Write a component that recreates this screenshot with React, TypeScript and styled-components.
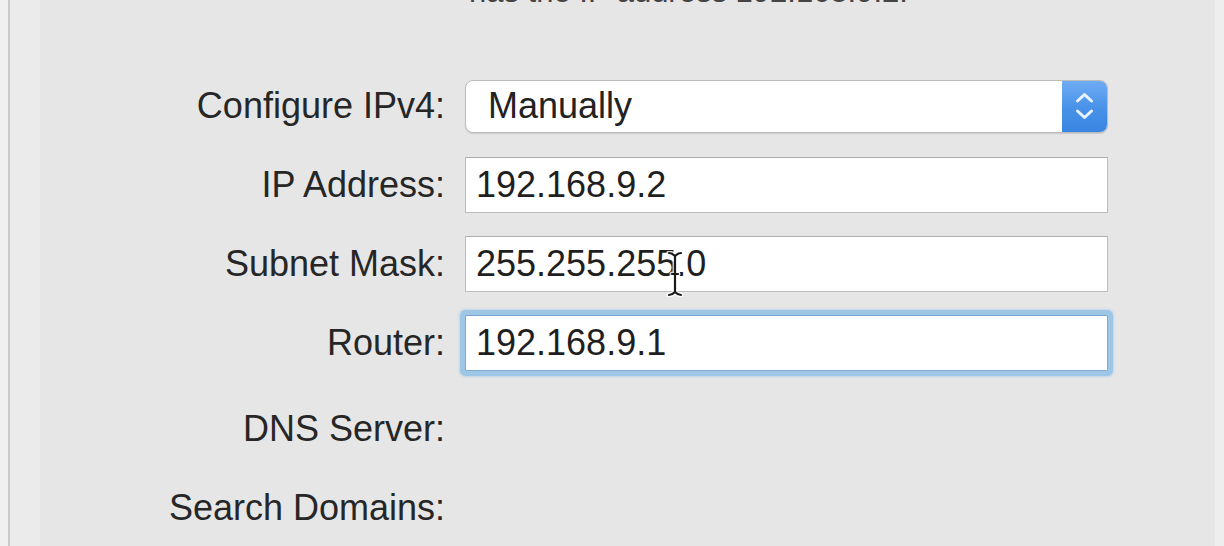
import React from "react";
import styled, { createGlobalStyle } from "styled-components";

const Global = createGlobalStyle`
  html, body { margin: 0; padding: 0; }
  body {
    width: 1224px;
    height: 546px;
    overflow: hidden;
    background: #f0f0f0;
    font-family: "Liberation Sans", Arial, Helvetica, sans-serif;
    -webkit-font-smoothing: antialiased;
  }
`;

const Page = styled.div`
  display: flex;
  width: 1224px;
  height: 546px;
  overflow: hidden;
`;

const Gutter = styled.div<{ $w: number; $bg: string }>`
  flex: 0 0 ${(p) => p.$w}px;
  background: ${(p) => p.$bg};
`;

const Panel = styled.div`
  flex: 1;
  background: #e6e6e6;
  overflow: hidden;
`;

const Form = styled.div`
  display: flex;
  flex-direction: column;
  gap: 23px;
`;

const Row = styled.div<{ $offset?: number; $h?: number }>`
  display: grid;
  grid-template-columns: 405px 643px;
  column-gap: 20px;
  align-items: center;
  height: ${(p) => p.$h ?? 56}px;
  margin-top: ${(p) => p.$offset ?? 0}px;
`;

const Label = styled.div`
  text-align: right;
  font-size: 36px;
  color: #262626;
  white-space: nowrap;
`;

const Status = styled.div`
  font-size: 31px;
  line-height: 31px;
  color: #444444;
  padding-left: 4px;
  white-space: nowrap;
`;

const Field = styled.div<{ $focused?: boolean }>`
  position: relative;
  box-sizing: border-box;
  height: 56px;
  display: flex;
  align-items: center;
  padding-left: 10px;
  background: #ffffff;
  border: 1px solid ${(p) => (p.$focused ? "#7fa9cf" : "#bdbdbd")};
  border-top-color: ${(p) => (p.$focused ? "#7aa4cb" : "#aeaeae")};
  border-radius: ${(p) => (p.$focused ? "2px" : "0")};
  box-shadow: ${(p) =>
    p.$focused ? "0 0 0 5px #9dc6e7, 0 0 2px 6px rgba(157,198,231,0.5)" : "none"};
  font-size: 36px;
  color: #1f1f1f;
`;

const Popup = styled.div`
  box-sizing: border-box;
  height: 53px;
  display: flex;
  align-items: stretch;
  background: #ffffff;
  border: 1px solid #bcbcbc;
  border-radius: 8px;
  overflow: hidden;
  box-shadow: 0 1px 1px rgba(0, 0, 0, 0.12);
`;

const PopupText = styled.div`
  flex: 1;
  display: flex;
  align-items: center;
  padding-left: 22px;
  font-size: 36px;
  color: #222222;
`;

const Stepper = styled.div`
  flex: 0 0 45px;
  display: flex;
  align-items: center;
  justify-content: center;
  background: linear-gradient(#6eacf3, #4791e8 55%, #3a85e2);
`;

const Cursor = styled.svg`
  position: absolute;
  left: 200px;
  top: 14px;
`;

export default function App() {
  return (
    <>
      <Global />
      <Page>
        <Gutter $w={8} $bg="#f0f0f0" />
        <Gutter $w={2} $bg="#cbcbcb" />
        <Gutter $w={30} $bg="#ebebeb" />
        <Panel>
          <Form>
            <Row $h={31} $offset={-24}>
              <div />
              <Status>has the IP address 192.168.9.2.</Status>
            </Row>
            <Row $offset={48}>
              <Label>Configure IPv4:</Label>
              <Popup>
                <PopupText>Manually</PopupText>
                <Stepper>
                  <svg width="45" height="53" viewBox="0 0 45 53">
                    <path
                      d="M15.5 21 L22.5 14.5 L29.5 21"
                      fill="none"
                      stroke="#eaf3ff"
                      strokeWidth="3"
                      strokeLinecap="round"
                      strokeLinejoin="round"
                    />
                    <path
                      d="M15.5 31 L22.5 37.5 L29.5 31"
                      fill="none"
                      stroke="#eaf3ff"
                      strokeWidth="3"
                      strokeLinecap="round"
                      strokeLinejoin="round"
                    />
                  </svg>
                </Stepper>
              </Popup>
            </Row>
            <Row>
              <Label>IP Address:</Label>
              <Field>192.168.9.2</Field>
            </Row>
            <Row>
              <Label>Subnet Mask:</Label>
              <Field>
                255.255.255.0
                <Cursor width="18" height="46" viewBox="0 0 18 46">
                  <path
                    d="M3 2 Q6 2 9 5 Q12 2 15 2 M9 5 L9 41 M3 44 Q6 44 9 41 Q12 44 15 44 M6 23 L12 23"
                    fill="none"
                    stroke="#ffffff"
                    strokeWidth="5"
                    strokeLinecap="round"
                    opacity="0.8"
                  />
                  <path
                    d="M3 2 Q6 2 9 5 Q12 2 15 2 M9 5 L9 41 M3 44 Q6 44 9 41 Q12 44 15 44 M6 23 L12 23"
                    fill="none"
                    stroke="#1a1a1a"
                    strokeWidth="2.2"
                    strokeLinecap="round"
                  />
                </Cursor>
              </Field>
            </Row>
            <Row>
              <Label>Router:</Label>
              <Field $focused>192.168.9.1</Field>
            </Row>
            <Row $offset={7}>
              <Label>DNS Server:</Label>
              <div />
            </Row>
            <Row>
              <Label>Search Domains:</Label>
              <div />
            </Row>
          </Form>
        </Panel>
        <Gutter $w={9} $bg="#eeeeee" />
      </Page>
    </>
  );
}
